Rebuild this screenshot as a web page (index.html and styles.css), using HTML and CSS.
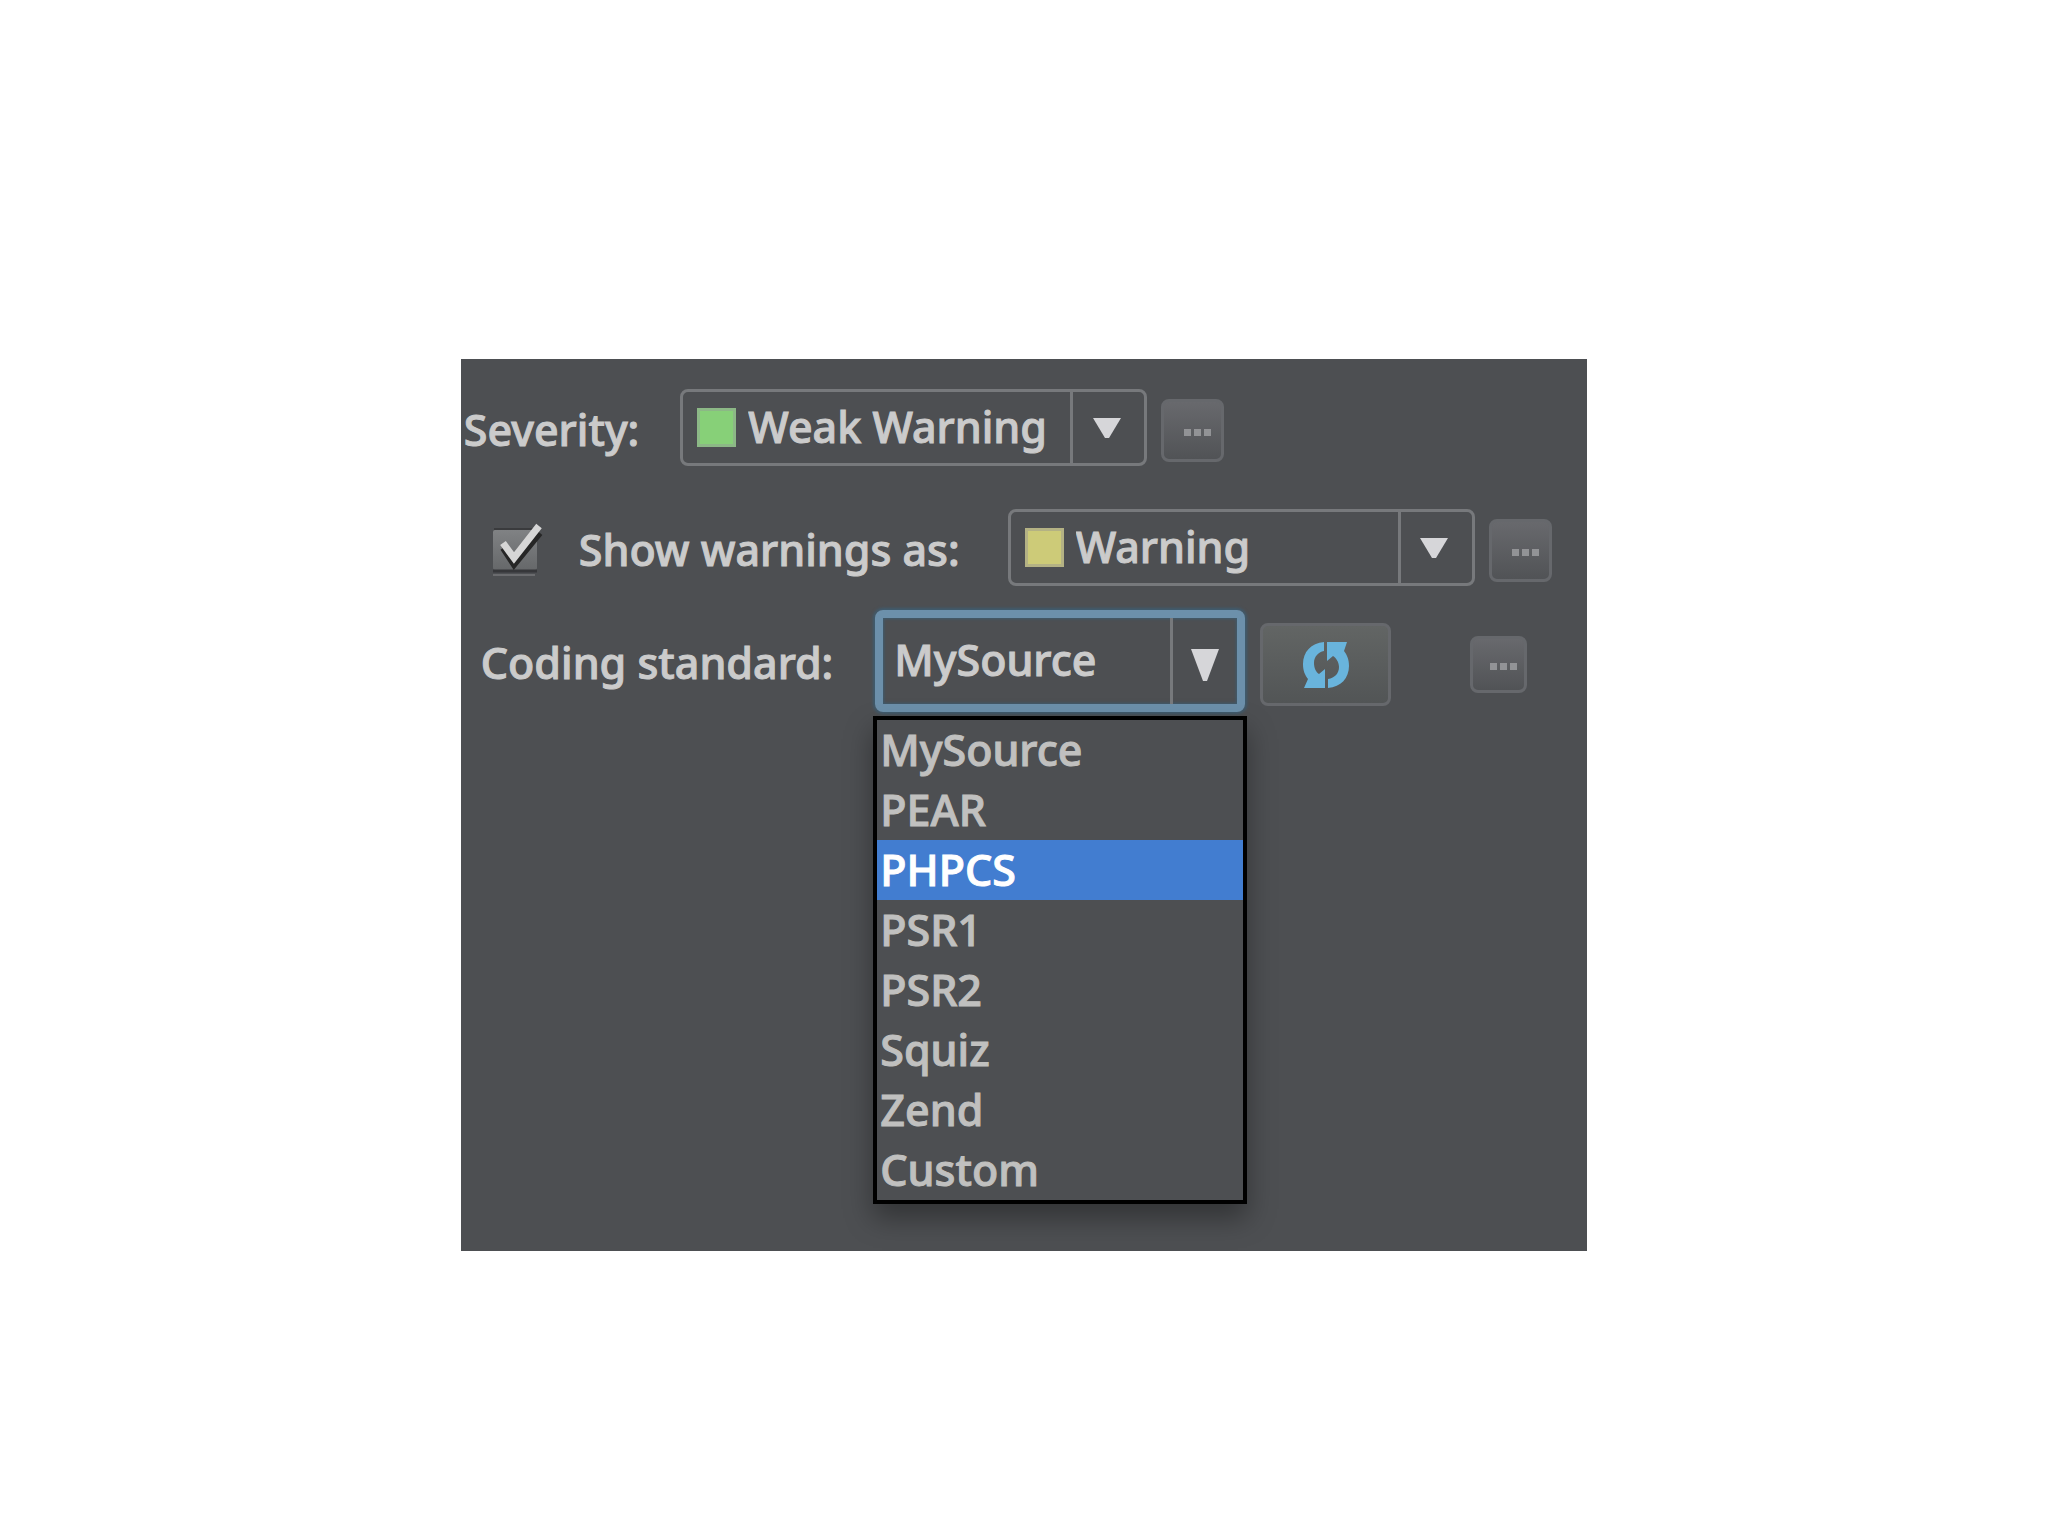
FILE: index.html
```html
<!DOCTYPE html>
<html lang="en">
<head>
    <meta charset="UTF-8">
    <meta name="viewport" content="width=device-width, initial-scale=1.0">
    <title>Inspection settings</title>
    <link rel="stylesheet" href="styles.css">
</head>
<body>
    <form class="panel">
        <div class="row">
            <label class="label" for="severity">Severity:</label>
            <div class="combo">
                <span class="swatch swatch-green"></span>
                <select id="severity">
                    <option>Weak Warning</option>
                    <option>Warning</option>
                </select>
                <span class="arrow"><svg width="28" height="20" viewBox="0 0 28 20"><path d="M0 0h28L16 20h-4z"/></svg></span>
            </div>
            <button type="button" class="more" aria-label="Edit severities"><i></i><i></i><i></i></button>
        </div>

        <div class="row row-warnings">
            <input type="checkbox" class="check" id="showWarnings" checked>
            <svg class="check-icon" viewBox="0 0 56 56">
                <defs>
                    <linearGradient id="box" x1="0" y1="0" x2="0" y2="1">
                        <stop offset="0" stop-color="#808284"/>
                        <stop offset="1" stop-color="#66686a"/>
                    </linearGradient>
                </defs>
                <path d="M5 9h43" stroke="#3a3b3d" stroke-width="2"/>
                <rect x="4" y="10" width="44" height="40" rx="2" fill="url(#box)"/>
                <path d="M4 51h44" stroke="#36373a" stroke-width="3"/>
                <path d="M4 55h42" stroke="#6a6b6e" stroke-width="2"/>
                <path d="M14 28l11 17L51 13" fill="none" stroke="#262626" stroke-width="6"/>
                <path d="M14 23l11 15L50 6" fill="none" stroke="#d6d6d6" stroke-width="7"/>
            </svg>
            <label class="label" for="showWarnings">Show warnings as:</label>
            <div class="combo">
                <span class="swatch swatch-yellow"></span>
                <select aria-label="Show warnings as">
                    <option>Warning</option>
                    <option>Weak Warning</option>
                </select>
                <span class="arrow"><svg width="28" height="20" viewBox="0 0 28 20"><path d="M0 0h28L16 20h-4z"/></svg></span>
            </div>
            <button type="button" class="more" aria-label="Edit severities"><i></i><i></i><i></i></button>
        </div>

        <div class="row row-standard">
            <label class="label" for="standard">Coding standard:</label>
            <div class="dropdown">
                <div class="combo combo-focus">
                    <select id="standard">
                        <option>MySource</option>
                        <option>PEAR</option>
                        <option>PHPCS</option>
                        <option>PSR1</option>
                        <option>PSR2</option>
                        <option>Squiz</option>
                        <option>Zend</option>
                        <option>Custom</option>
                    </select>
                    <span class="arrow"><svg width="28" height="32" viewBox="0 0 28 32"><path d="M0 0h28L16 32h-4z"/></svg></span>
                </div>
                <ul class="menu" role="listbox" aria-label="Coding standard">
                    <li role="option">MySource</li>
                    <li role="option">PEAR</li>
                    <li role="option" class="active" aria-selected="true">PHPCS</li>
                    <li role="option">PSR1</li>
                    <li role="option">PSR2</li>
                    <li role="option">Squiz</li>
                    <li role="option">Zend</li>
                    <li role="option">Custom</li>
                </ul>
            </div>
            <button type="button" class="refresh" aria-label="Refresh">
                <svg width="52" height="52" viewBox="0 0 52 52">
                    <path d="M24 3C11 4 3 13 3 25c0 7 2 11 5 15l-4 9h21V30l-6 5c-3-2-5-6-5-11 0-6 4-11 10-12z" fill="#69b4dc"/>
                    <path d="M28 49c13-1 21-10 21-22 0-7-2-11-5-15l3-9H27v19l6-5c3 2 6 6 6 11 0 6-4 11-11 12z" fill="#69b4dc"/>
                </svg>
            </button>
            <button type="button" class="more more-small" aria-label="Options"><i></i><i></i><i></i></button>
        </div>
    </form>
</body>
</html>
```
FILE: styles.css
```css
* {
    box-sizing: border-box;
}
body {
    margin: 0;
    padding-top: 359px;
    background-color: #fff;
    color: #cbcbcb;
    font-family: "Noto Sans", sans-serif;
    font-size: 43px;
    font-weight: 500;
    line-height: 60px;
    -webkit-text-stroke: 1px;
}
.panel {
    width: 55%;
    margin: 0 auto;
    padding: 30px 0 47px;
    background-color: #4d4f52;
}
.row {
    display: flex;
    align-items: center;
    padding-left: 3px;
}
.row-warnings {
    margin-top: 43px;
    padding-left: 28px;
}
.row-standard {
    align-items: flex-start;
    margin-top: 24px;
    padding-left: 20px;
}
.label {
    padding-top: 4px;
    margin-right: 41px;
    white-space: nowrap;
}
.row-warnings .label {
    margin-right: 48px;
}
.row-standard .label {
    margin-right: 42px;
    line-height: 102px;
    padding-top: 2px;
}

/* combo boxes */
.combo {
    display: flex;
    align-items: center;
    flex: 0 1 467px;
    height: 77px;
    padding-left: 14px;
    border: 3px solid #77797c;
    border-radius: 8px;
}
.combo select {
    flex: 1;
    min-width: 0;
    height: 100%;
    padding: 0 0 2px;
    border: none;
    outline: none;
    appearance: none;
    background: none;
    color: inherit;
    font: inherit;
}
.swatch {
    width: 39px;
    height: 39px;
    margin-right: 12px;
    border: 3px solid;
}
.swatch-green {
    background-color: #87d078;
    border-color: #8cb886;
}
.swatch-yellow {
    background-color: #cdcb78;
    border-color: #b4b284;
}
.arrow {
    display: flex;
    align-items: center;
    justify-content: center;
    width: 74px;
    height: 100%;
    padding-right: 4px;
    border-left: 3px solid #77797c;
    fill: #d6d6d9;
}
.combo-focus {
    height: 102px;
    padding-left: 11px;
    border: 8px solid #6c90ab;
    box-shadow: 0 0 3px 2px #3f5c70, inset 0 0 3px 1px #3f5c70;
}
.combo-focus .arrow {
    width: 67px;
    padding: 8px 0 0;
}

/* open list */
.dropdown {
    flex: 0 1 370px;
}
.menu {
    margin: 4px -2px 0;
    padding: 0;
    list-style: none;
    border: 4px solid #000;
    background-color: #4d4f52;
    color: #c0c0bf;
    box-shadow: 0 14px 26px rgba(0, 0, 0, 0.35);
}
.menu li {
    padding-left: 3px;
}
.menu .active {
    background-color: #427dd0;
    color: #fff;
}

/* buttons */
.more,
.refresh {
    display: flex;
    align-items: center;
    justify-content: center;
    border: 3px solid #66686c;
    border-radius: 8px;
    background: linear-gradient(#68696d, #515356);
}
.more {
    gap: 3px;
    width: 63px;
    height: 63px;
    margin: 6px 0 0 14px;
    padding: 4px 0 0 10px;
}
.more i {
    width: 7px;
    height: 7px;
    background-color: #929396;
}
.more-small {
    width: 57px;
    height: 57px;
    margin: 26px 0 0 79px;
}
.refresh {
    width: 131px;
    height: 83px;
    margin: 13px 0 0 15px;
    padding: 0;
    background: linear-gradient(#626564, #525556);
}

/* checkbox is drawn by the svg next to it */
.check {
    appearance: none;
    width: 56px;
    height: 56px;
    margin: 0 -56px 0 0;
}
.check-icon {
    width: 56px;
    height: 56px;
    margin-right: 34px;
    pointer-events: none;
}
```
